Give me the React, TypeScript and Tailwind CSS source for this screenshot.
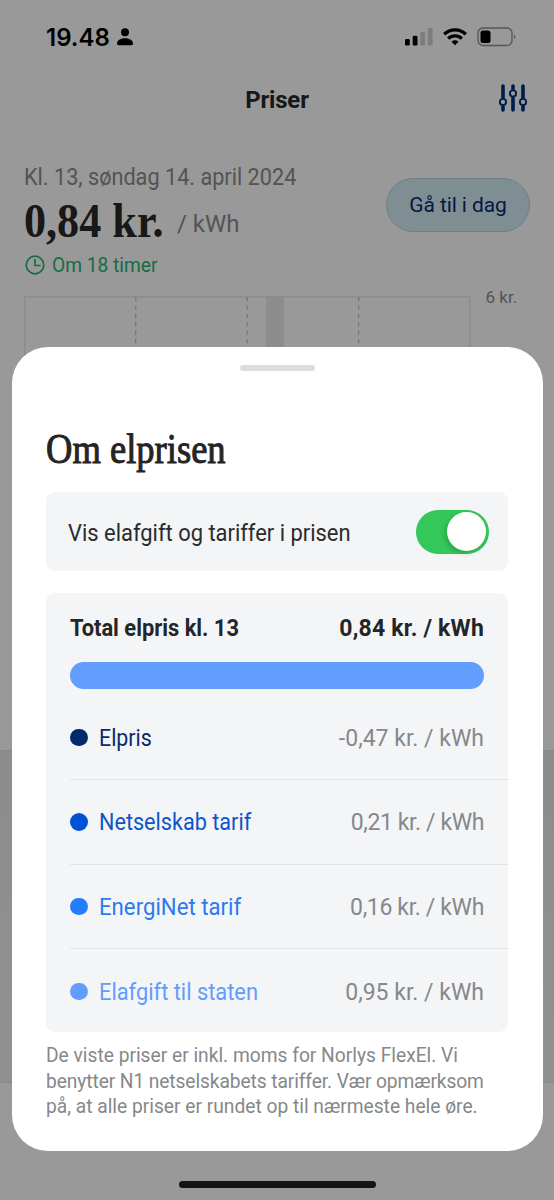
const tariffs = [
    { name: "Elpris", price: "-0,47 kr. / kWh", dot: "bg-[#002a6e]", text: "text-[#0b2a6b] scale-x-[.93]", priceText: "tracking-normal" },
    { name: "Netselskab tarif", price: "0,21 kr. / kWh", dot: "bg-[#0052d4]", text: "text-[#1054cc] scale-x-[.94]", priceText: "tracking-[-.4px]" },
    { name: "EnergiNet tarif", price: "0,16 kr. / kWh", dot: "bg-[#247cff]", text: "text-[#2b7af0] scale-x-[.965]", priceText: "tracking-[-.35px]" },
    { name: "Elafgift til staten", price: "0,95 kr. / kWh", dot: "bg-[#629cff]", text: "text-[#629cff] scale-x-[.95]", priceText: "tracking-normal" },
];

function StatusBar() {
    return (
        <div className="flex h-[74px] items-center justify-between pl-[46px] pr-[37px]">
            <div className="flex items-center gap-[7px] text-black">
                <span className="pt-[2px] font-[Inter] text-[24px] font-semibold leading-none">19.48</span>
                <svg width="16" height="18" viewBox="0 0 16 18" fill="currentColor">
                    <circle cx="8" cy="4.3" r="4" />
                    <path d="M0 15.6C0 12.6 3.2 10.3 8 10.3s8 2.3 8 5.3c0 1-.6 1.6-1.6 1.6H1.6C.6 17.2 0 16.6 0 15.6Z" />
                </svg>
            </div>

            <div className="flex items-center">
                <svg width="28" height="18" viewBox="0 0 28 18">
                    <rect x="0" y="11" width="4.8" height="6.5" rx="1.3" />
                    <rect x="7.7" y="7.8" width="4.8" height="9.7" rx="1.3" />
                    <rect x="15.3" y="4" width="4.8" height="13.5" rx="1.3" fill="#d0d0d0" />
                    <rect x="22.8" y="0" width="4.8" height="17.5" rx="1.3" fill="#d0d0d0" />
                </svg>
                <svg className="ml-[10px]" width="24" height="18" viewBox="0 0 24 18" fill="none" stroke="black">
                    <path d="M1.2 6.2a15.500 15.500 0 0 1 21.600 0" strokeWidth="3.3" />
                    <path d="M5.2 10.6a9.700 9.700 0 0 1 13.600 0" strokeWidth="3.3" />
                    <path d="M12 17.3 8.500 13.800a5 5 0 0 1 7 0Z" fill="black" stroke="none" />
                </svg>
                <svg className="ml-[10px]" width="40" height="20" viewBox="0 0 40 20">
                    <rect x="1" y="1" width="34" height="17.500" rx="5" fill="none" stroke="#8f8f8f" strokeWidth="1.3" />
                    <rect x="3.5" y="3.5" width="10" height="12.5" rx="2.5" />
                    <path d="M37 7.5c1.800.6 1.800 4 0 4.600Z" fill="#8f8f8f" />
                </svg>
            </div>
        </div>
    );
}

function SlidersIcon() {
    return (
        <svg width="28" height="28" viewBox="0 0 28 28" fill="none" stroke="#003080" strokeLinecap="round">
            <path d="M4 2v11.500M4 22.500v3.500M14 2v3M14 14v12M24 2v11.500M24 22.500v3.500" strokeWidth="3.6" />
            <circle cx="4" cy="18" r="3.1" strokeWidth="1.9" />
            <circle cx="14" cy="9.5" r="3.1" strokeWidth="1.9" />
            <circle cx="24" cy="18" r="3.1" strokeWidth="1.9" />
        </svg>
    );
}

function PriceChart() {
    return (
        <svg className="overflow-visible" width="530" height="454" viewBox="0 0 530 454" fill="none">
            <rect x="242" y="0" width="18" height="454" fill="#ececec" />
            <path d="M.8 454V.8h445V454" stroke="#e6e6e6" strokeWidth="1.3" />
            <path d="M111.700 1v453M223.200 1v453M334.700 1v453" stroke="#c4c4c4" strokeWidth="1.3" strokeDasharray="4.2 4.2" />
            <text x="461.5" y="7" fill="#8c8c8c" fontSize="17" fontFamily="Roboto">6 kr.</text>
        </svg>
    );
}

function PricesPage() {
    return (
        <div className="h-full bg-white">
            <StatusBar />

            <header className="grid h-[52px] grid-cols-3 items-center px-[27px]">
                <h1 className="col-start-2 text-center text-[24px] font-bold tracking-[-.2px] text-[#282828]">Priser</h1>
                <button className="-mt-1 justify-self-end"><SlidersIcon /></button>
            </header>

            <section className="flex h-[170px] items-start justify-between px-6 pt-[36px]">
                <div>
                    <p className="w-[300px] origin-left scale-x-[.903] whitespace-nowrap text-[24px] leading-[30px] text-[#8c8c8c]">Kl. 13, søndag 14. april 2024</p>
                    <div className="flex h-[58px] items-center">
                        <span className="w-[153px] whitespace-nowrap">
                            <span className="inline-block origin-left scale-x-[.92] font-['Liberation_Serif'] text-[48px] font-bold leading-none text-[#282828]">0,84 kr.</span>
                        </span>
                        <span className="pt-[6px] text-[24px] text-[#8c8c8c]">/ kWh</span>
                    </div>
                    <p className="flex items-center gap-[7px] text-[20.5px] leading-[30px] text-[#28b570]">
                        <svg width="21" height="21" viewBox="0 0 21 21" fill="none" stroke="currentColor" strokeWidth="1.7">
                            <circle cx="11" cy="10" r="8.8" />
                            <path d="M11 4v6.500h5.500" />
                        </svg>
                        <span className="origin-left scale-x-[.935]">Om 18 timer</span>
                    </p>
                </div>
                <button className="mt-[16px] h-[54px] w-[144px] rounded-full border border-[#b8d4de] bg-[#d3edf6] pt-[2px] text-[21px] tracking-[-.1px] text-[#0b2a6b]">
                    Gå til i dag
                </button>
            </section>

            <div className="h-[454px] pl-6">
                <PriceChart />
            </div>
            <div className="h-[333px] border-y border-[#e2e3e5] bg-linear-to-b from-[#e9ebee] to-[#eff1f3]" />
        </div>
    );
}

function PriceSheet() {
    return (
        <div className="absolute left-[11.5px] top-[347px] flex h-[804px] w-[531px] flex-col rounded-[36px] bg-white px-[34.5px] pt-[18px]">
            <div className="h-[6px] w-[75px] self-center rounded-full bg-[#dddde1]" />

            <h2 className="mt-[52px] h-[69px] shrink-0 whitespace-nowrap">
                <span className="inline-block origin-left scale-x-[.87] font-['Liberation_Serif'] text-[42px] leading-[52px] text-[#242424] [-webkit-text-stroke:1px]">Om elprisen</span>
            </h2>

            <div className="flex h-[78.5px] shrink-0 items-center justify-between rounded-[9px] bg-[#f4f5f7] pl-[22px] pr-[19.5px]">
                <span className="origin-left scale-x-[.953] whitespace-nowrap pt-[5px] text-[23px] text-[#2a2b2d]">Vis elafgift og tariffer i prisen</span>
                <button role="switch" aria-checked="true" className="mt-px flex h-[44px] w-[73px] shrink-0 items-center justify-end rounded-full bg-[#34c759] pr-[2.5px]">
                    <span className="size-[39px] rounded-full bg-white shadow-[-2px_2px_5px_rgba(0,0,0,.18)]" />
                </button>
            </div>

            <div className="mt-[22px] h-[439.5px] shrink-0 rounded-[9px] bg-[#f4f5f7] pl-6">
                <div className="flex h-[69.5px] items-center justify-between pr-6 pt-[3px] text-[23px] font-bold text-[#242528]">
                    <span className="origin-left scale-x-[.95]">Total elpris kl. 13</span>
                    <span className="tracking-[.2px]">0,84 kr. / kWh</span>
                </div>
                <div className="mr-6 h-[27px] rounded-full bg-[#629dff]" />
                <ul className="mt-[7px]">
                    {tariffs.map((tariff) => (
                        <li key={tariff.name} className="flex h-[84.4px] items-center border-b border-[#e1e2e4] pr-6 text-[23px] last:border-0">
                            <span className={`mr-[11px] size-[17.5px] rounded-full ${tariff.dot}`} />
                            <span className={`origin-left pt-[3px] ${tariff.text}`}>{tariff.name}</span>
                            <span className={`ml-auto pt-[3px] text-[#86888b] ${tariff.priceText}`}>{tariff.price}</span>
                        </li>
                    ))}
                </ul>
            </div>

            <p className="mt-[11px] origin-left scale-x-[.96] whitespace-nowrap text-[20px] leading-[25.5px] text-[#86888a]">
                De viste priser er inkl. moms for Norlys FlexEl. Vi<br />
                <span className="tracking-[-.1px]">benytter N1 netselskabets tariffer. Vær opmærksom</span><br />
                på, at alle priser er rundet op til nærmeste hele øre.
            </p>
        </div>
    );
}

export default function App() {
    return (
        <main className="relative h-[1200px] w-[554px] overflow-hidden font-[Roboto,sans-serif]">
            <PricesPage />
            <div className="absolute inset-0 bg-black/40" />
            <PriceSheet />
            <div className="absolute bottom-3 left-[179px] h-[7px] w-[197px] rounded-full bg-[#141414]" />
        </main>
    );
}
